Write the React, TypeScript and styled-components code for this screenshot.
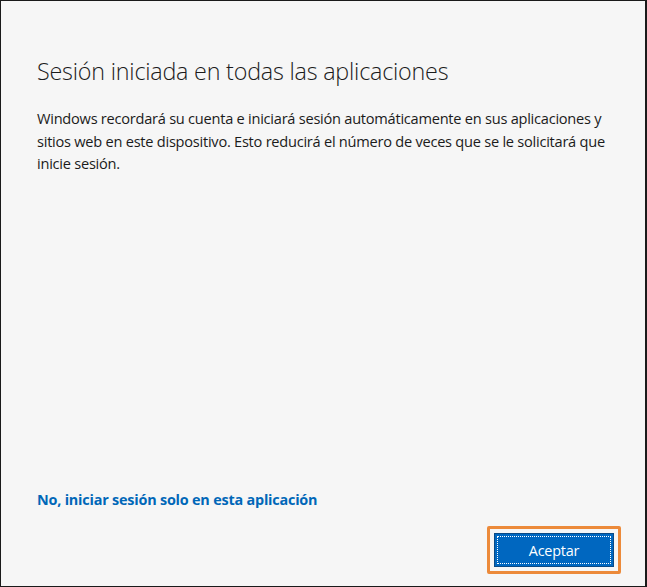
import React from "react";
import styled, { createGlobalStyle } from "styled-components";

const GlobalStyle = createGlobalStyle`
  html, body {
    margin: 0;
    padding: 0;
    background: #ffffff;
  }
  * {
    box-sizing: border-box;
  }
`;

const Dialog = styled.div`
  width: 647px;
  height: 587px;
  border: 1px solid #1a1a1a;
  border-right-width: 2px;
  background: #f6f6f6;
  display: flex;
  flex-direction: column;
  padding: 52px 28px 12px 36px;
  font-family: "Open Sans", "Noto Sans", sans-serif;
  color: #1b1b1b;
`;

const Title = styled.h1`
  margin: 0 0 18px;
  font-size: 23.3px;
  line-height: 36px;
  font-weight: 300;
  letter-spacing: -0.2px;
`;

const Body = styled.p`
  margin: 0;
  font-size: 14.6px;
  line-height: 22.5px;
  letter-spacing: -0.25px;
  max-width: 574px;
`;

const Spacer = styled.div`
  flex: 1;
`;

const Link = styled.a`
  font-size: 14.4px;
  font-weight: 700;
  color: #0067b8;
  text-decoration: none;
  line-height: 20px;
  letter-spacing: -0.2px;
  cursor: pointer;
`;

const Footer = styled.div`
  display: flex;
  justify-content: flex-end;
  margin-top: 16px;
`;

const FocusRing = styled.div`
  border: 3px solid #ec8a3a;
  border-radius: 2px;
  padding: 4px;
  margin-right: -4px;
`;

const PrimaryButton = styled.button`
  width: 120px;
  height: 34px;
  padding: 2px;
  border: 1px solid #0a4a86;
  background: #0067c0;
  cursor: pointer;
  display: flex;

  span {
    flex: 1;
    display: flex;
    align-items: center;
    justify-content: center;
    border: 1px dotted #ffffff;
    color: #ffffff;
    font-family: "Open Sans", "Noto Sans", sans-serif;
    font-size: 14.4px;
    letter-spacing: -0.2px;
  }
`;

export default function App() {
  return (
    <>
      <GlobalStyle />
      <Dialog>
        <Title>Sesión iniciada en todas las aplicaciones</Title>
        <Body>
          Windows recordará su cuenta e iniciará sesión automáticamente en sus
          aplicaciones y sitios web en este dispositivo. Esto reducirá el número
          de veces que se le solicitará que inicie sesión.
        </Body>
        <Spacer />
        <Link>No, iniciar sesión solo en esta aplicación</Link>
        <Footer>
          <FocusRing>
            <PrimaryButton>
              <span>Aceptar</span>
            </PrimaryButton>
          </FocusRing>
        </Footer>
      </Dialog>
    </>
  );
}
